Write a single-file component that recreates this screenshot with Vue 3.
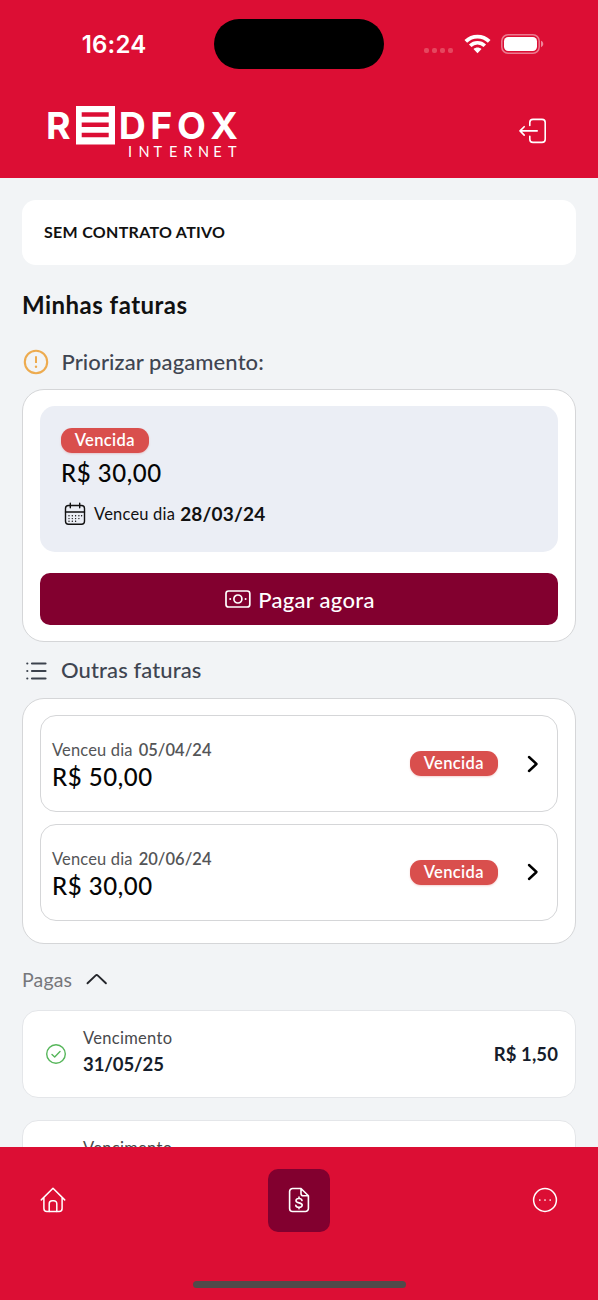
<script setup>
const openInvoices = [
  { due: '05/04/24', amount: 'R$ 50,00' },
  { due: '20/06/24', amount: 'R$ 30,00' },
]
const paidInvoices = [
  { id: 1, due: '31/05/25', amount: 'R$ 1,50' },
  { id: 2 },
]
</script>

<template>
  <div class="screen">
    <header class="header">
      <div class="status">
        <span class="time">16:24</span>
        <span class="island"></span>
        <div class="status-icons">
          <span class="signal"><i v-for="n in 4" :key="n"></i></span>
          <svg class="wifi" width="27" height="20" viewBox="0 0 27 20" fill="none" stroke="#fff">
            <path d="M1.800 7.400C8.400 1 18.600 1 25.200 7.400" stroke-width="3.800" />
            <path d="M6.200 11.800c4.200-4 10.400-4 14.600 0" stroke-width="3.600" />
            <path d="M13.500 19.200l-4-4.100c2.300-2 5.700-2 8 0z" fill="#fff" stroke="none" />
          </svg>
          <svg width="43" height="20" viewBox="0 0 43 20">
            <rect x="0.800" y="0.800" width="37.400" height="18.400" rx="6.200" fill="none" stroke="#fff" stroke-opacity=".45" stroke-width="1.500" />
            <rect x="3" y="3" width="33" height="14" rx="4.200" fill="#fff" />
            <path d="M40 6.800c3 1.200 3 5.200 0 6.400z" fill="#fff" fill-opacity=".5" />
          </svg>
        </div>
      </div>
      <div class="brand-row">
        <svg class="logo" width="192" height="54" viewBox="0 0 192 54" fill="#fff">
          <text class="logo-name" x="-2" y="33">R</text>
          <path fill-rule="evenodd" d="M28 0h39v38.500H28zM33.700 6.200v4.600h27v-4.600zM33.700 16.500v4.600h27v-4.600zM33.700 26.700v4.600h27v-4.600z" />
          <text class="logo-name" x="70.800 102.300 129 162.300" y="33">DFOX</text>
          <text class="logo-sub" x="80 90.500 105.500 121 135.300 150 165.200 180" y="50.800">INTERNET</text>
        </svg>
        <svg class="logout" width="28" height="26" viewBox="0 0 28 26" fill="none" stroke="#fff" stroke-width="1.600" stroke-linecap="round" stroke-linejoin="round">
          <path d="M10.800 7.500V4.600a3.200 3.200 0 0 1 3.200-3.200h9a3.200 3.200 0 0 1 3.200 3.200v16.600a3.200 3.200 0 0 1-3.200 3.200h-9a3.200 3.200 0 0 1-3.200-3.200v-2.900" />
          <path d="M18.200 12.900H1.200M5.200 8.700L1 12.900l4.200 4.200" />
        </svg>
      </div>
    </header>

    <main class="content">
      <section class="contract">SEM CONTRATO ATIVO</section>
      <h1 class="title">Minhas faturas</h1>

      <div class="section-head">
        <svg class="head-icon" width="26" height="26" viewBox="0 0 26 26" fill="none" stroke="#edab4f">
          <circle cx="13" cy="13" r="11.200" stroke-width="2.100" />
          <path d="M13 7.200v6.800" stroke-width="2" />
          <circle cx="13" cy="17.800" r="1.200" fill="#edab4f" stroke="none" />
        </svg>
        <h2 class="head-priority">Priorizar pagamento:</h2>
      </div>
      <section class="panel">
        <div class="priority">
          <span class="badge">Vencida</span>
          <div class="amount">R$ 30,00</div>
          <div class="due">
            <svg width="22" height="24" viewBox="0 0 22 24" fill="none" stroke="#111" stroke-width="1.400" stroke-linecap="round">
              <rect x="1.500" y="3.500" width="19" height="18.800" rx="3" />
              <path d="M1.500 10h19M6.300 1.200v4.600M15.700 1.200v4.600" />
              <path d="M5 13.800h.01M8.300 13.800h.01M11.600 13.800h.01M14.900 13.800h.01M17.600 13.800h.01M5 16.600h.01M8.300 16.600h.01M11.600 16.600h.01M14.900 16.600h.01M5 19.200h.01M8.300 19.200h.01M11.600 19.200h.01" />
            </svg>
            <span class="due-label">Venceu dia</span>
            <b class="due-date">28/03/24</b>
          </div>
        </div>
        <button class="pay">
          <svg width="26" height="18" viewBox="0 0 26 18" fill="none" stroke="#fff" stroke-width="1.700">
            <rect x="1" y="1" width="23.800" height="16" rx="2.600" />
            <circle cx="12.900" cy="9" r="4" />
            <path d="M5.200 9h.01M20.600 9h.01" stroke-width="2" stroke-linecap="round" />
          </svg>
          <span>Pagar agora</span>
        </button>
      </section>

      <div class="section-head others">
        <svg class="head-icon list" width="22" height="18" viewBox="0 0 22 18" fill="none" stroke="#3c424d" stroke-width="2.200" stroke-linecap="round">
          <path d="M6 1.500h13.500M6 9h13.500M6 16.500h13.500M1.300 1.500h.01M1.300 9h.01M1.300 16.500h.01" />
        </svg>
        <h2 class="head-others">Outras faturas</h2>
      </div>
      <section class="panel list-panel">
        <article v-for="item in openInvoices" :key="item.due" class="invoice">
          <div class="invoice-info">
            <div class="invoice-due"><span>Venceu dia</span><b>{{ item.due }}</b></div>
            <div class="amount">{{ item.amount }}</div>
          </div>
          <span class="badge">Vencida</span>
          <svg class="next" width="12" height="18" viewBox="0 0 12 18" fill="none" stroke="#000" stroke-width="2.400" stroke-linecap="round" stroke-linejoin="round">
            <path d="M2 2l7.500 7L2 16" />
          </svg>
        </article>
      </section>

      <div class="paid-head">
        <span>Pagas</span>
        <svg width="22" height="12" viewBox="0 0 22 12" fill="none" stroke="#24262b" stroke-width="1.900" stroke-linecap="round" stroke-linejoin="round">
          <path d="M1.500 10.300l8-7.700q1.200-1.100 2.400 0l8 7.700" />
        </svg>
      </div>
      <article v-for="item in paidInvoices" :key="item.id" class="paid">
        <svg width="22" height="22" viewBox="0 0 22 22" fill="none" stroke="#56b65a" stroke-width="1.400" stroke-linecap="round" stroke-linejoin="round">
          <circle cx="11" cy="11" r="9.300" />
          <path d="M7 11.400l2.700 2.500L15 8.600" />
        </svg>
        <div class="paid-info">
          <div class="paid-label">Vencimento</div>
          <div class="paid-date">{{ item.due }}</div>
        </div>
        <div v-if="item.amount" class="paid-amount">{{ item.amount }}</div>
      </article>
    </main>

    <nav class="nav">
      <div class="nav-items">
        <a class="nav-item">
          <svg width="26" height="26" viewBox="0 0 26 26" fill="none" stroke="#fff" stroke-width="1.500" stroke-linecap="round" stroke-linejoin="round">
            <path d="M1.300 12.900L13 1.200l11.700 11.700M3.900 10.800v10.700a3 3 0 0 0 3 3h12.200a3 3 0 0 0 3-3V10.800" />
            <path d="M9.200 24.500v-7.800a3 3 0 0 1 3-3h1.600a3 3 0 0 1 3 3v7.800" />
          </svg>
        </a>
        <a class="nav-item active">
          <svg width="22" height="26" viewBox="0 0 22 26" fill="none" stroke="#fff" stroke-width="1.600" stroke-linecap="round" stroke-linejoin="round">
            <path d="M13 1.500H4.600a3 3 0 0 0-3 3v17a3 3 0 0 0 3 3h12.800a3 3 0 0 0 3-3V8.800zM13 1.500v5a2.300 2.300 0 0 0 2.300 2.300h5.100" />
            <path d="M14 13.500c-.3-1.300-1.500-2-3-2-1.700 0-3 .8-3 2.200 0 3 6.200 1.300 6.200 4.400 0 1.400-1.400 2.300-3.200 2.300-1.700 0-3-.8-3.200-2.100M11 10v1.500M11 20.400v1.400" />
          </svg>
        </a>
        <a class="nav-item">
          <svg width="26" height="26" viewBox="0 0 26 26" fill="none" stroke="#fff" stroke-width="1.500">
            <circle cx="13" cy="13" r="11.400" />
            <path d="M7.800 13h.01M13 13h.01M18.200 13h.01" stroke-width="1.700" stroke-linecap="round" />
          </svg>
        </a>
      </div>
      <div class="home-bar"></div>
    </nav>
  </div>
</template>

<style>
body { margin: 0; overflow: hidden; }
</style>

<style scoped>
* { box-sizing: border-box; }
.screen {
  display: flex;
  flex-direction: column;
  width: 598px;
  height: 1300px;
  overflow: hidden;
  background: #f2f4f6;
  font-family: Lato, "Liberation Sans", sans-serif;
  color: #111;
}
.header { flex: none; height: 178px; padding-top: 19px; background: #dc0e34; }
.status { display: grid; grid-template-columns: 214px 170px 1fr; align-items: center; height: 50px; }
.time { padding: 2px 0 0 14px; text-align: center; font: 600 24px/30px Inter, sans-serif; letter-spacing: 0.2px; color: #fff; }
.island { height: 50px; border-radius: 25px; background: #000; }
.status-icons { display: flex; align-items: center; padding-left: 40px; }
.signal { display: flex; gap: 3px; width: 39.500px; padding-top: 13px; }
.signal i { width: 5px; height: 5px; border-radius: 2px; background: #e5475f; }
.wifi { margin-right: 10px; }
.brand-row { display: flex; justify-content: space-between; align-items: flex-start; padding: 36.500px 51px 0 48px; }
.logo { overflow: visible; }
.logo-name { font: 700 37.500px Inter, sans-serif; }
.logo-sub { font: 400 14.500px/1 Lato, sans-serif; }
.logout { margin-top: 12.500px; }

.content { flex: 1; min-height: 0; overflow: hidden; padding: 22px 22.500px 0 22px; }
.contract { height: 64.500px; padding-left: 22px; border-radius: 14px; background: #fff; font-size: 16px; font-weight: 700; line-height: 64px; letter-spacing: 0.300px; }
.title { margin: 25px 0 0; font-size: 24px; font-weight: 700; line-height: 30px; letter-spacing: 0.480px; }
.section-head { display: flex; align-items: center; height: 28px; margin: 28px 0 13px; }
.section-head h2 { margin: 0 0 0 12.500px; font-size: 22px; font-weight: 500; line-height: 28px; letter-spacing: 0.100px; color: #3f4551; }
.head-icon { margin-left: 1px; }
.section-head.others { margin: 13.500px 0 14px; }
.head-icon.list { margin: 2px 0 0 4px; }
.section-head .head-others { margin-left: 13px; }
.panel { height: 253.500px; padding: 16.500px; border: 1px solid #d5d6d8; border-radius: 22px; background: #fff; }
.priority { height: 145.500px; padding: 22px 21.500px 0; border-radius: 15px; background: #ebeef5; }
.badge { display: block; width: 87.500px; height: 24.500px; border-radius: 11px; background: #d94f4d; color: #fff; font-size: 16.500px; font-weight: 600; line-height: 24px; letter-spacing: 0.350px; text-align: center; box-shadow: 0 1px 2px rgba(217, 79, 77, .25); }
.amount { font-size: 24px; line-height: 30px; font-weight: 500; letter-spacing: 0.550px; color: #050505; }
.priority .amount { margin-top: 5.500px; }
.due { display: flex; align-items: center; height: 26px; margin: 12.500px 0 0 3px; }
.due-label { margin-left: 8px; font-size: 16.500px; letter-spacing: 0.200px; }
.due-date { margin-left: 5px; font-size: 19px; font-weight: 700; letter-spacing: 0.200px; }
.pay { display: flex; align-items: center; justify-content: center; gap: 7.500px; width: 100%; height: 51.500px; margin-top: 21.500px; padding: 1px 0 0 2px; border: 0; border-radius: 10px; background: #82002f; color: #fff; font-family: inherit; font-size: 22px; font-weight: 500; letter-spacing: 0.300px; }
.list-panel { display: flex; flex-direction: column; gap: 11.500px; height: 246px; }
.invoice { display: flex; align-items: center; flex: none; height: 97.300px; padding: 0 18.500px 0 11.500px; border: 1px solid #d5d6d8; border-radius: 16px; }
.invoice .badge { line-height: 25px; }
.invoice-info { flex: 1; padding-top: 4px; }
.invoice-due { display: flex; gap: 6px; font-size: 16.500px; line-height: 22px; letter-spacing: 0.150px; color: #545557; }
.invoice-due b { font-weight: 600; letter-spacing: 0.050px; }
.invoice .amount { margin-top: 0.500px; }
.next { margin-left: 29px; }
.paid-head { display: flex; align-items: center; gap: 14px; height: 28px; margin: 21.500px 0 17px; font-size: 19.500px; letter-spacing: 0.150px; color: #76777b; }
.paid { display: flex; align-items: center; height: 87.500px; margin-bottom: 22.500px; padding: 0 16.500px 0 22px; border: 1px solid #e4e6e9; border-radius: 16px; background: #fff; }
.paid-info { flex: 1; height: 53px; margin-left: 16px; }
.paid-label { font-size: 16.500px; line-height: 22px; letter-spacing: 0.300px; color: #48494c; }
.paid-date { margin-top: 3px; font-size: 18.500px; font-weight: 700; line-height: 24px; letter-spacing: -0.100px; color: #161d2b; }
.paid-amount { font-size: 18.500px; font-weight: 700; letter-spacing: 0.100px; color: #161d2b; }

.nav { flex: none; display: flex; flex-direction: column; align-items: center; height: 152.700px; background: #dc0e34; }
.nav-items { display: flex; justify-content: space-between; width: 554px; padding-top: 22px; }
.nav-item { display: flex; align-items: center; justify-content: center; width: 62px; height: 62.300px; border-radius: 10px; }
.active { background: #82002f; }
.home-bar { width: 213px; height: 7px; margin-top: 49.700px; border-radius: 4px; background: #514a4a; }
</style>
